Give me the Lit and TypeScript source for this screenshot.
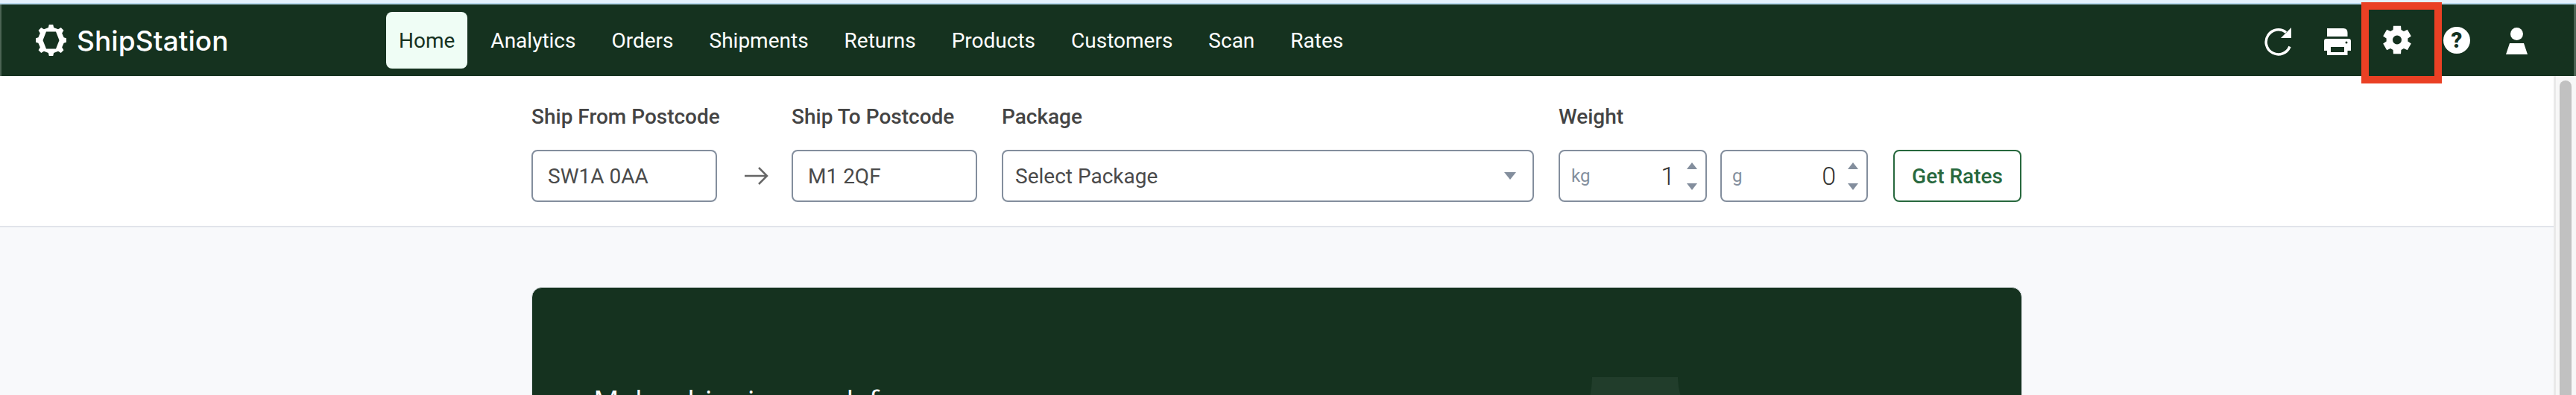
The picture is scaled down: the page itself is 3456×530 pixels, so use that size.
import { LitElement, html, css } from "lit";
import { customElement } from "lit/decorators.js";

const NAV = ["Analytics", "Orders", "Shipments", "Returns", "Products", "Customers", "Scan", "Rates"];

function gearOutline(cx: number, cy: number, n: number, ro: number, ri: number, tip: number, base: number): string {
  const pts: string[] = [];
  const at = (r: number, deg: number) => {
    const a = (deg * Math.PI) / 180;
    return `${(cx + r * Math.cos(a)).toFixed(2)} ${(cy + r * Math.sin(a)).toFixed(2)}`;
  };
  for (let i = 0; i < n; i++) {
    const c = -90 + (360 / n) * i;
    pts.push(at(ri, c - base), at(ro, c - tip), at(ro, c + tip), at(ri, c + base));
  }
  return "M" + pts.join("L") + "Z";
}

const logoPath = gearOutline(20.5, 21, 8, 21.5, 17.5, 7, 12) + "M14 9.500H27L31.500 21 27 32.500H14L9.500 21Z";
const settingsPath =
  gearOutline(19, 19.5, 6, 19.5, 14.5, 15, 22) +
  "M19 13.500a6 6 0 1 0 0 12a6 6 0 1 0 0-12Z";

@customElement("app-root")
export class AppRoot extends LitElement {
  static styles = css`
    :host { display: block; width: 3456px; height: 530px; overflow: hidden; background: #f8f9fb; font-family: Roboto, "Liberation Sans", sans-serif; position: relative; }
    .strip { height: 6px; background: #e4f1fc; border-bottom: 2px solid #b9d9ee; box-sizing: border-box; }
    .nav { height: 96px; box-sizing: border-box; background: #15321f; border-left: 2px solid #4b6353; border-right: 3px solid #4b6353; display: flex; align-items: center; padding: 0 59px 0 46px; color: #fff; }
    .brand { display: flex; align-items: center; gap: 14px; width: 470px; flex: none; }
    .brand svg { flex: none; display: block; }
    .brand span { font-family: Inter, Roboto, sans-serif; font-size: 37px; font-weight: 500; letter-spacing: 0.1px; }
    .links { display: flex; align-items: center; gap: 14px; flex: 1; }
    .link { padding: 0 17px; height: 76px; display: flex; align-items: center; font-size: 28px; }
    .link.active { background: #effdf5; color: #15321f; border-radius: 8px; }
    .icons { display: flex; align-items: center; gap: 44px; }
    .slot { width: 36px; height: 44px; display: flex; justify-content: center; flex: none; }
    .slot svg { display: block; flex: none; fill: #fff; }
    .callout { position: absolute; left: 3168px; top: 3px; width: 108px; height: 109px; border: 10px solid #ea4024; box-sizing: border-box; }
    .body { display: flex; height: 428px; }
    .main { flex: 1; min-width: 0; display: flex; flex-direction: column; }
    .filters { flex: none; height: 203px; background: #fff; border-bottom: 2px solid #e1e4ea; box-sizing: border-box; display: flex; justify-content: center; }
    .form { width: 2000px; display: flex; align-items: flex-start; padding-top: 39px; box-sizing: border-box; }
    .field { display: flex; flex-direction: column; gap: 28px; }
    .field.narrow { width: 249px; flex: none; }
    .lbl { font-size: 28px; font-weight: 500; color: #444; line-height: 32px; height: 32px; white-space: nowrap; }
    .box { height: 70px; border: 2px solid #838e9d; border-radius: 8px; box-sizing: border-box; background: #fff; display: flex; align-items: center; font-size: 28px; color: #4a4a4a; }
    .post { width: 249px; padding-left: 20px; }
    .arrow { width: 100px; flex: none; display: flex; justify-content: center; align-items: center; height: 70px; margin-top: 60px; padding-left: 5px; box-sizing: border-box; }
    .sel { width: 714px; padding: 0 22px 0 16px; justify-content: space-between; }
    .tri { width: 0; height: 0; border-left: 8px solid transparent; border-right: 8px solid transparent; border-top: 10px solid #838e9d; }
    .pkg, .wt { margin-left: 33px; }
    .wrow { display: flex; gap: 18px; }
    .num { width: 199px; padding: 0 11px 0 15px; }
    .num.b { width: 198px; padding-left: 14px; }
    .unit { font-size: 24px; color: #838e9d; }
    .val { flex: 1; text-align: right; font-size: 34px; font-weight: 300; color: #333; padding-right: 16px; }
    .spin { display: flex; flex-direction: column; gap: 19px; }
    .up, .dn { width: 0; height: 0; border-left: 7.500px solid transparent; border-right: 7.500px solid transparent; }
    .up { border-bottom: 9px solid #838e9d; }
    .dn { border-top: 9px solid #838e9d; }
    .btn { margin-left: 34px; margin-top: 60px; width: 172px; height: 70px; box-sizing: border-box; border: 2px solid #27683d; border-radius: 8px; color: #27683d; font-size: 28px; font-weight: 500; display: flex; align-items: center; justify-content: center; background: #fff; white-space: nowrap; }
    .content { flex: 1; min-height: 0; overflow: hidden; display: flex; justify-content: center; padding-top: 80px; box-sizing: border-box; }
    .hero { width: 2000px; height: 400px; box-sizing: border-box; border: 1px solid #dfe3e6; background: #15321f; border-radius: 14px; padding: 125px 0 0 82px; color: #fff; font-family: "Open Sans", sans-serif; font-size: 38.500px; flex: none; position: relative; white-space: nowrap; }
    .decor { position: absolute; left: 1418px; top: 120px; display: block; }
    .track { flex: none; width: 30px; background: #f7f7f7; border-left: 3px solid #e9e9e9; box-sizing: border-box; padding: 6px 6px 0 5px; }
    .thumb { height: 100%; background: #c1c1c1; border-radius: 8px 8px 0 0; }
  `;

  render() {
    return html`
      <div class="strip"></div>
      <div class="nav">
        <div class="brand">
          <svg width="41" height="42" viewBox="0 0 41 42"><path fill="#fff" fill-rule="evenodd" d="${logoPath}"/></svg>
          <span>ShipStation</span>
        </div>
        <div class="links">
          <div class="link active">Home</div>
          ${NAV.map((n) => html`<div class="link">${n}</div>`)}
        </div>
        <div class="icons">
          <div class="slot"><svg width="36" height="44" viewBox="0 -5 36 44"><path fill="none" stroke="#fff" stroke-width="3.500" d="M34 25.500A16.500 16.500 0 1 1 29 6.500"/><path d="M36 0V14H22Z"/></svg></div>
          <div class="slot"><svg width="36" height="44" viewBox="0 -6 36 44"><path d="M4 0H26Q31.500 0 31.500 6V11H4Z"/><path fill-rule="evenodd" d="M3 14H33A3 3 0 0 1 36 17V30H31.500V36H4V30H0V17A3 3 0 0 1 3 14ZM9 25V32H27V25ZM30 17.500a1.500 1.500 0 1 0 0 3a1.500 1.500 0 1 0 0-3Z"/></svg></div>
          <div class="slot"><svg width="38" height="44" viewBox="0 -2 38 44"><path fill-rule="evenodd" d="${settingsPath}"/></svg></div>
          <div class="slot"><svg width="36" height="44" viewBox="0 -4 36 44"><circle cx="18" cy="18" r="18"/><text x="18" y="27.500" text-anchor="middle" font-size="29" font-weight="900" fill="#15321f" font-family="Roboto">?</text></svg></div>
          <div class="slot"><svg width="29" height="44" viewBox="0 -5 29 44"><circle cx="14.500" cy="8.500" r="8.500"/><path d="M5 21H24L29 36H0Z"/></svg></div>
        </div>
      </div>
      <div class="callout"></div>
      <div class="body">
        <div class="main">
          <div class="filters">
            <div class="form">
              <div class="field narrow"><div class="lbl">Ship From Postcode</div><div class="box post">SW1A 0AA</div></div>
              <div class="arrow"><svg width="32" height="24" viewBox="0 0 32 24"><path fill="none" stroke="#666" stroke-width="2.500" d="M0 12H30M19 1l11 11-11 11"/></svg></div>
              <div class="field narrow"><div class="lbl">Ship To Postcode</div><div class="box post">M1 2QF</div></div>
              <div class="field pkg"><div class="lbl">Package</div><div class="box sel">Select Package<div class="tri"></div></div></div>
              <div class="field wt"><div class="lbl">Weight</div><div class="wrow">
                <div class="box num"><span class="unit">kg</span><span class="val">1</span><div class="spin"><div class="up"></div><div class="dn"></div></div></div>
                <div class="box num b"><span class="unit">g</span><span class="val">0</span><div class="spin"><div class="up"></div><div class="dn"></div></div></div>
              </div></div>
              <div class="btn">Get Rates</div>
            </div>
          </div>
          <div class="content">
            <div class="hero">Make shipping work for you
              <svg class="decor" width="124" height="30" viewBox="0 0 124 30"><path fill="#213d2b" d="M4 0H119Q119 14 124 30H0Q4 14 4 0Z"/></svg>
            </div>
          </div>
        </div>
        <div class="track"><div class="thumb"></div></div>
      </div>`;
  }
}
